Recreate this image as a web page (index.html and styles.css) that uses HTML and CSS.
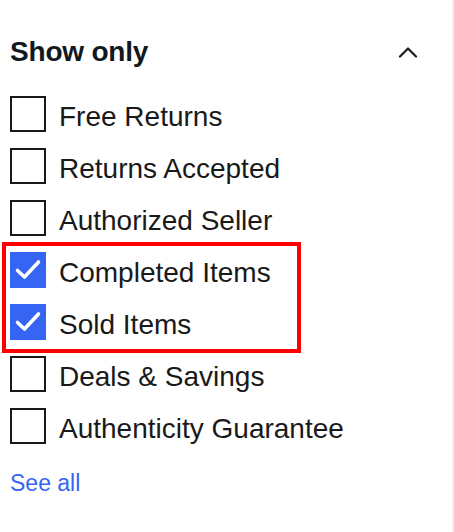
FILE: index.html
```html
<!DOCTYPE html>
<html lang="en">
<head>
<meta charset="utf-8">
<title>Show only</title>
<link rel="stylesheet" href="styles.css">
</head>
<body>
<aside class="panel">
  <div class="head">
    <h2 class="title">Show only</h2>
    <button class="toggle" aria-label="Collapse">
      <svg width="20" height="12" viewBox="0 0 20 12"><path d="M2 10.5 L10 2.5 L18 10.5" fill="none" stroke="#191919" stroke-width="2.2" stroke-linecap="round" stroke-linejoin="round"/></svg>
    </button>
  </div>
  <ul class="opts">
    <li class="opt"><span class="box"></span><span class="label">Free Returns</span></li>
    <li class="opt"><span class="box"></span><span class="label">Returns Accepted</span></li>
    <li class="opt"><span class="box"></span><span class="label">Authorized Seller</span></li>
    <li class="group">
      <ul class="opts">
        <li class="opt"><span class="box on"><svg width="36" height="36" viewBox="0 0 36 36"><path d="M7.5 18.5 L14.5 25 L28.5 10" fill="none" stroke="#fff" stroke-width="3.6" stroke-linecap="round" stroke-linejoin="round"/></svg></span><span class="label">Completed Items</span></li>
        <li class="opt"><span class="box on"><svg width="36" height="36" viewBox="0 0 36 36"><path d="M7.5 18.5 L14.5 25 L28.5 10" fill="none" stroke="#fff" stroke-width="3.6" stroke-linecap="round" stroke-linejoin="round"/></svg></span><span class="label">Sold Items</span></li>
      </ul>
    </li>
    <li class="opt"><span class="box"></span><span class="label">Deals &amp; Savings</span></li>
    <li class="opt"><span class="box"></span><span class="label">Authenticity Guarantee</span></li>
  </ul>
  <a class="see" href="#">See all</a>
</aside>
</body>
</html>
```

FILE: styles.css
```css
html, body {
  margin: 0;
  padding: 0;
  background: #fff;
}
body {
  font-family: "Liberation Sans", Arial, sans-serif;
  color: #191919;
}
.panel {
  box-sizing: border-box;
  width: 454px;
  height: 532px;
  padding: 34px 0 0 10px;
  border-right: 2px solid #f0f0f0;
  display: flex;
  flex-direction: column;
}
.head {
  display: flex;
  align-items: center;
  justify-content: space-between;
  height: 36px;
  padding-right: 34px;
}
.title {
  margin: 0;
  font-size: 28px;
  line-height: 36px;
  font-weight: 700;
  letter-spacing: -0.2px;
  color: #111820;
}
.toggle {
  border: 0;
  background: none;
  padding: 0;
  width: 20px;
  height: 12px;
  display: flex;
}
.opts {
  list-style: none;
  margin: 0;
  padding: 0;
  display: flex;
  flex-direction: column;
  gap: 16px;
}
.panel > .opts {
  margin-top: 26px;
}
.opt {
  display: flex;
  align-items: center;
  gap: 13px;
  height: 36px;
}
.box {
  box-sizing: border-box;
  width: 36px;
  height: 36px;
  border: 2px solid #191919;
  flex: none;
  display: flex;
}
.box.on {
  border: 0;
  background: #3665f3;
}
.label {
  font-size: 28px;
  line-height: 31px;
  padding-top: 5px;
  color: #191919;
  white-space: nowrap;
}
.group {
  border: 4px solid #ff0000;
  margin: -10px 0 -13px -8px;
  padding: 6px 0 9px 4px;
  width: 287px;
}
.see {
  margin-top: 26px;
  font-size: 23px;
  line-height: 26px;
  color: #3665f3;
  text-decoration: none;
  align-self: flex-start;
}
```
